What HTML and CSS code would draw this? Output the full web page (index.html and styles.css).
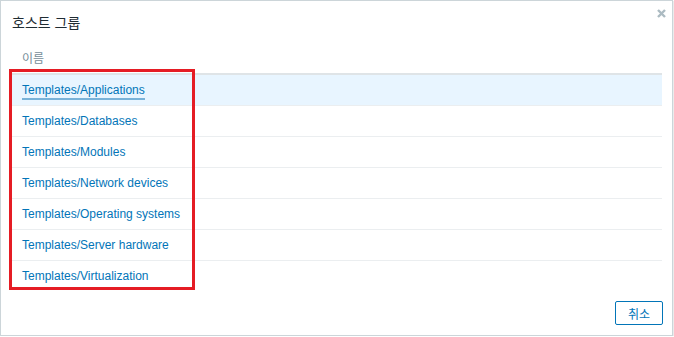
FILE: index.html
```html
<!DOCTYPE html>
<html lang="ko">
<head>
    <meta charset="UTF-8">
    <title>호스트 그룹</title>
    <link rel="stylesheet" href="styles.css">
</head>
<body>

    <div class="dialog">
        <h4 class="dialog-title">호스트 그룹</h4>
        <button class="btn-close" title="닫기">
            <svg width="9" height="9" viewBox="0 0 9 9"><path d="M1 1 L8 8 M8 1 L1 8" stroke="#acbbc2" stroke-width="2.4"/></svg>
        </button>

        <!-- Host group list -->
        <table class="list-table">
            <thead>
                <tr><th>이름</th></tr>
            </thead>
            <tbody>
                <tr class="row-active"><td><a href="#" class="link-focus">Templates/Applications</a></td></tr>
                <tr><td><a href="#">Templates/Databases</a></td></tr>
                <tr><td><a href="#">Templates/Modules</a></td></tr>
                <tr><td><a href="#">Templates/Network devices</a></td></tr>
                <tr><td><a href="#">Templates/Operating systems</a></td></tr>
                <tr><td><a href="#">Templates/Server hardware</a></td></tr>
                <tr><td><a href="#">Templates/Virtualization</a></td></tr>
            </tbody>
        </table>

        <div class="dialog-footer">
            <button class="btn-alt">취소</button>
        </div>

        <!-- annotation box -->
        <div class="highlight-box"></div>
    </div>

</body>
</html>
```

FILE: styles.css
```css
body {
    margin: 0;
    background-color: #ffffff;
    font-family: "Liberation Sans", Arial, "Noto Sans CJK KR", sans-serif;
    font-size: 12px;
}

.dialog {
    position: relative;
    box-sizing: border-box;
    width: 673px;
    height: 336px;
    border: 1px solid #ccd5d9;
    box-shadow: 1px 1px 1px rgba(0, 0, 0, 0.08);
    display: flex;
    flex-direction: column;
}

.dialog-title {
    margin: 0;
    padding: 12px 12px 0 11px;
    font-size: 14px;
    font-weight: normal;
    line-height: 20px;
    color: #1f2c33;
}

.btn-close {
    position: absolute;
    top: 8px;
    right: 6px;
    padding: 0;
    border: none;
    background: none;
    width: 9px;
    height: 9px;
    cursor: pointer;
}

.btn-close svg {
    display: block;
}

.list-table {
    margin: 12px 10px 0 11px;
    width: 650px;
    border-collapse: collapse;
}

.list-table th {
    height: 25px;
    padding: 0 10px 3px;
    text-align: left;
    font-weight: normal;
    color: #768d99;
    border-bottom: 2px solid #dfe4e7;
}

.list-table td {
    height: 30px;
    padding: 0 10px;
    border-bottom: 1px solid #ebeef0;
}

.list-table tbody tr:last-child td {
    border-bottom: none;
}

.row-active td {
    background-color: #e8f5ff;
}

.list-table a {
    color: #0275b8;
    text-decoration: none;
}

.link-focus {
    padding-bottom: 1px;
    border-bottom: 2px solid #78b2d8;
}

.dialog-footer {
    margin-top: auto;
    padding: 0 9px 10px 0;
    display: flex;
    justify-content: flex-end;
}

.btn-alt {
    width: 48px;
    height: 24px;
    padding: 0;
    background-color: #ffffff;
    border: 1px solid #0275b8;
    border-radius: 2px;
    color: #0275b8;
    font-family: "Liberation Sans", Arial, "Noto Sans CJK KR", sans-serif;
    font-size: 12px;
    cursor: pointer;
}

.highlight-box {
    position: absolute;
    left: 8px;
    top: 68px;
    width: 186px;
    height: 221px;
    box-sizing: border-box;
    border: 3px solid #e51c24;
    pointer-events: none;
}
```
